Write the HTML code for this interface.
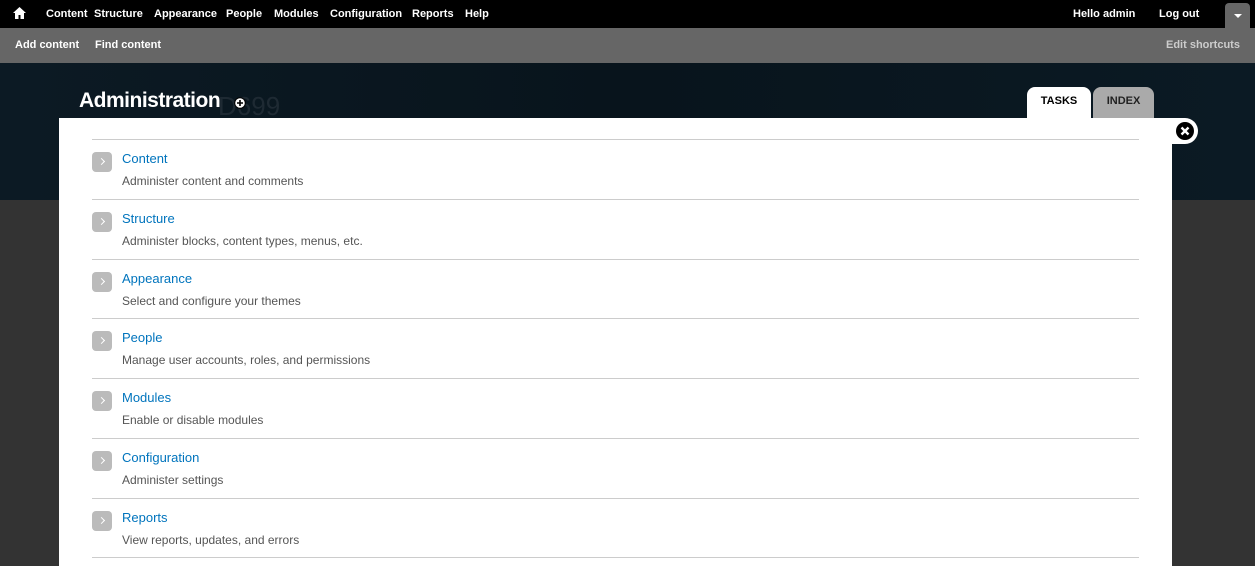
<!DOCTYPE html>
<html><head><style>
html,body{margin:0;width:1255px;height:566px;overflow:hidden}
body{font-family:"Liberation Sans",sans-serif;background:#333;position:relative}
.top{position:absolute;left:0;top:0;width:1255px;height:28px;background:#000;color:#fff;font-size:11px;font-weight:bold}
.top span{position:absolute;top:8px;white-space:nowrap}
.sc{position:absolute;top:28px;left:0;width:1255px;height:35px;background:#666;color:#fff;font-size:11px;font-weight:bold}
.sc span{position:absolute;top:11px;white-space:nowrap}
.hdr{position:absolute;top:63px;left:0;width:1255px;height:137px;background:linear-gradient(90deg,#0c1a24,#08141c 50%,#0b1a24)}
.box{position:absolute;left:59px;top:118px;width:1113px;height:448px;background:#fff;overflow:hidden}
.item{position:absolute;left:33px;width:1047px;border-top:1px solid #ccc;height:59px}
.ic{position:absolute;left:0;top:12px;width:20px;height:20px;border-radius:4px;background:#bbb}
.ic::after{content:"";position:absolute;left:7px;top:7px;width:4px;height:4px;border-right:1.5px solid #fff;border-top:1.5px solid #fff;transform:rotate(45deg)}
.t{position:absolute;left:30px;top:11px;color:#0074bd;font-size:13px}
.d{position:absolute;left:30px;top:34px;color:#555;font-size:12px}
</style></head><body>
<div class="top">
<svg style="position:absolute;left:13px;top:7px" width="13" height="12" viewBox="0 0 13 12"><path d="M6.5 0L0 6h2v6h3.5V8h2v4H11V6h2z" fill="#fff"/></svg>
<span style="left:46px">Content</span><span style="left:94px">Structure</span><span style="left:154px">Appearance</span><span style="left:226px">People</span><span style="left:274px">Modules</span><span style="left:330px">Configuration</span><span style="left:412px">Reports</span><span style="left:465px">Help</span>
<span style="left:1073px">Hello admin</span><span style="left:1159px">Log out</span>
<div style="position:absolute;left:1225px;top:3px;width:25px;height:25px;background:#666;border-radius:4px 4px 0 0"><div style="position:absolute;left:9px;top:11px;border:4px solid transparent;border-top:4px solid #fff;border-bottom:0"></div></div>
</div>
<div class="sc"><span style="left:15px">Add content</span><span style="left:95px">Find content</span><span style="left:1166px;color:#ccc">Edit shortcuts</span></div>
<div class="hdr">
<div style="position:absolute;left:218px;top:28px;color:#1e2a33;font-size:26px">D699</div>
<div style="position:absolute;left:79px;top:26px;color:#fff;font-size:21px;font-weight:bold;letter-spacing:-0.5px">Administration</div>
<svg style="position:absolute;left:234px;top:34px" width="12" height="12" viewBox="0 0 12 12"><circle cx="6" cy="6" r="5.3" fill="#fff" stroke="#000" stroke-width="1"/><path d="M6 3v6M3 6h6" stroke="#000" stroke-width="1.6"/></svg>
<div style="position:absolute;left:1027px;top:24px;width:64px;height:31px;background:#fff;border-radius:8px 8px 0 0;font-size:11px;font-weight:bold;text-align:center;line-height:28px">TASKS</div>
<div style="position:absolute;left:1093px;top:24px;width:61px;height:31px;background:#aaa;border-radius:8px 8px 0 0;font-size:11px;font-weight:bold;text-align:center;line-height:28px;color:#222">INDEX</div>
</div>
<div class="box">
<div class="item" style="top:21px"><div class="ic"></div><div class="t">Content</div><div class="d">Administer content and comments</div></div>
<div class="item" style="top:81px"><div class="ic"></div><div class="t">Structure</div><div class="d">Administer blocks, content types, menus, etc.</div></div>
<div class="item" style="top:141px"><div class="ic"></div><div class="t">Appearance</div><div class="d">Select and configure your themes</div></div>
<div class="item" style="top:200px"><div class="ic"></div><div class="t">People</div><div class="d">Manage user accounts, roles, and permissions</div></div>
<div class="item" style="top:260px"><div class="ic"></div><div class="t">Modules</div><div class="d">Enable or disable modules</div></div>
<div class="item" style="top:320px"><div class="ic"></div><div class="t">Configuration</div><div class="d">Administer settings</div></div>
<div class="item" style="top:380px"><div class="ic"></div><div class="t">Reports</div><div class="d">View reports, updates, and errors</div></div>
<div class="item" style="top:439px;height:5px"></div>
</div>
<div style="position:absolute;left:1166px;top:118px;width:32px;height:26px;background:#fff;border-radius:0 13px 13px 0"></div>
<svg style="position:absolute;left:1176px;top:122px" width="18" height="18" viewBox="0 0 18 18"><circle cx="9" cy="9" r="9" fill="#000"/><path d="M5.5 5.5l7 7M12.5 5.5l-7 7" stroke="#fff" stroke-width="2.4"/></svg>
</body></html>
